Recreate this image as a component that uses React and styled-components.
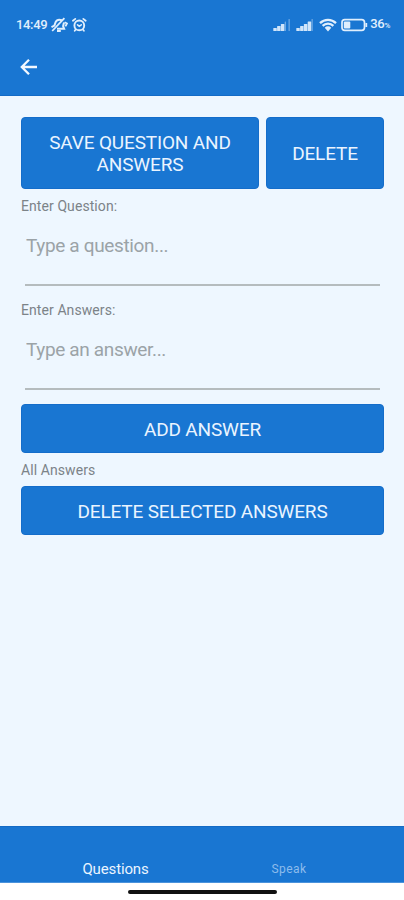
import React, { useEffect, useState } from 'react';
import styled, { createGlobalStyle } from 'styled-components';

const GlobalStyle = createGlobalStyle`
  * {
    box-sizing: border-box;
  }

  body {
    margin: 0;
    background-color: #ffffff;
    font-family: Roboto, 'Liberation Sans', sans-serif;
  }
`;

const Screen = styled.div`
  display: flex;
  flex-direction: column;
  width: 404px;
  height: 900px;
  background-color: #eef7ff;
`;

const Header = styled.header`
  height: 96px;
  background-color: #1976d2;
  border-bottom: 1px solid #136bc6;
  color: #e0effd;
`;

const StatusBar = styled.div`
  display: flex;
  align-items: center;
  justify-content: space-between;
  height: 48px;
  padding: 1px 14px 0 16px;
`;

const StatusGroup = styled.div`
  display: flex;
  align-items: center;
  gap: ${(props) => props.$gap};

  svg {
    display: block;
  }
`;

const Clock = styled.span`
  font-size: 13px;
  font-weight: 500;
  line-height: 16px;
  letter-spacing: -0.35px;
`;

const Charge = styled.span`
  margin-left: -2px;
  padding-top: 1px;
  font-size: 13px;
  font-weight: 500;
  line-height: 16px;
  letter-spacing: -0.3px;

  small {
    font-size: 8px;
  }
`;

const BackButton = styled.button`
  display: flex;
  margin: 7px 0 0 16px;
  padding: 0;
  border: 0;
  background: none;
  color: #f3f8ff;
`;

const Content = styled.main`
  display: flex;
  flex: 1;
  flex-direction: column;
  padding: 21px 20px 0 21px;
`;

const ButtonRow = styled.div`
  display: grid;
  grid-template-columns: 238px 118px;
  gap: 7px;
`;

const Button = styled.button`
  height: ${(props) => (props.$tall ? '72px' : '49px')};
  padding: 2px 16px 0;
  border: 1px solid #146dca;
  border-radius: 4px;
  background-color: #1976d2;
  color: #eaf4ff;
  font-family: inherit;
  font-size: 19px;
  line-height: 22px;
  letter-spacing: -0.16px;
  text-transform: uppercase;
`;

const Label = styled.label`
  height: ${(props) => props.$height};
  margin: 0;
  padding-top: ${(props) => props.$top || '9px'};
  color: #7c8388;
  font-size: 14px;
  line-height: 16px;
  letter-spacing: 0.08px;
`;

const Input = styled.input`
  height: 64px;
  margin: 0 4px;
  padding: 0 0 16px 1px;
  border: 0;
  border-bottom: 2px solid #b5bcbe;
  outline: 0;
  background: none;
  color: #33383c;
  font-family: inherit;
  font-size: 19px;
  letter-spacing: -0.35px;

  &::placeholder {
    color: #9ba3a7;
    opacity: 1;
  }
`;

const Answers = styled.section`
  display: flex;
  flex-direction: column;
  padding-top: 14px;
`;

const TabBar = styled.nav`
  display: grid;
  grid-template-columns: 231px 116px;
  align-items: end;
  height: 57px;
  padding-bottom: 5px;
  background-color: #1976d2;
  border-top: 1px solid #146bc5;
  border-bottom: 1px solid #4b93dc;
`;

const Tab = styled.a`
  color: ${(props) => (props.$active ? '#eaf4ff' : '#8dbcec')};
  font-size: ${(props) => (props.$active ? '15px' : '12px')};
  line-height: 16px;
  letter-spacing: ${(props) => (props.$active ? '-0.15px' : '0.4px')};
  text-align: center;
`;

const GestureBar = styled.footer`
  display: flex;
  justify-content: center;
  height: 17px;
  padding: 7px 0 0 1px;
  background-color: #ffffff;
`;

const HomePill = styled.div`
  width: 149px;
  height: 4px;
  border-radius: 2px;
  background-color: #111111;
`;

const MutedIcon = () => (
  <svg width='18' height='16' viewBox='0 0 18 16' fill='none' stroke='currentColor'>
    <path d='M1.5 10.2 4.4 8.6l1.2-3.4C6.6 2.9 9 2.2 12 3.2M14 5.6l-.9 3.6 1 2.5H7' strokeWidth='2' />
    <path d='M2.2 14 14.4 1.2' strokeWidth='1.8' />
    <path d='M7 14h3.8M14.6 5.2l2.4 1.2-1.6 3' strokeWidth='1.8' />
  </svg>
);

const AlarmIcon = () => (
  <svg width='16' height='16' viewBox='0 0 16 16' fill='none' stroke='currentColor' strokeLinecap='round'>
    <circle cx='8.3' cy='8.4' r='4.9' strokeWidth='1.9' />
    <path d='M1.9 3.8 4.3 1.9M14.7 3.8l-2.4-1.9M4.5 12.8l-.8 1M12.1 12.8l.8 1' strokeWidth='1.8' />
    <path d='M6.5 7.8l1.8 1.4 2-1.4' strokeWidth='1.5' />
  </svg>
);

const SignalIcon = ({ level }) => (
  <svg width='19' height='14' viewBox='0 0 19 14' fill='currentColor'>
    {[3, 5, 7, 9.5, 12].map((height, i) => (
      <rect
        key={height}
        x={i * 3.8 + 0.3}
        y={13 - height}
        width={i < level ? 3.5 : 1.3}
        height={height}
        rx='0.5'
        opacity={i < level ? 0.92 : 0.42}
      />
    ))}
  </svg>
);

const WifiIcon = () => (
  <svg width='18' height='14' viewBox='0 0 18 14' fill='none' stroke='currentColor'>
    <path d='M1 5.1C5.5.7 12.5.7 17 5.1M3.6 7.8c3.1-3 7.7-3 10.8 0' strokeWidth='2.3' />
    <path d='M5.7 9.7c2-1.8 4.6-1.8 6.6 0L9 13.4Z' fill='currentColor' stroke='none' />
  </svg>
);

const BatteryIcon = () => (
  <svg width='27' height='14' viewBox='0 0 27 14' fill='none'>
    <rect x='1' y='1.7' width='22.5' height='10.6' rx='2.8' stroke='currentColor' strokeWidth='1.7' />
    <rect x='2.8' y='3.5' width='6.5' height='7' rx='1' fill='currentColor' />
    <path d='M25.3 5v4' stroke='currentColor' strokeWidth='1.8' />
  </svg>
);

const BackIcon = () => (
  <svg width='24' height='24' viewBox='0 0 24 24' fill='none' stroke='currentColor' strokeWidth='2.3'>
    <path d='M21 12H6.5M13 4.8 5.8 12l7.2 7.2' />
  </svg>
);

function App() {
  const [question, setQuestion] = useState('');
  const [answer, setAnswer] = useState('');

  useEffect(() => {
    document.title = 'Questions';
  }, []);

  return (
    <Screen>
      <GlobalStyle />
      <Header>
        <StatusBar>
          <StatusGroup $gap='3px'>
            <Clock>14:49</Clock>
            <MutedIcon />
            <AlarmIcon />
          </StatusGroup>
          <StatusGroup $gap='4px'>
            <SignalIcon level={3} />
            <SignalIcon level={4} />
            <WifiIcon />
            <BatteryIcon />
            <Charge>
              36<small>%</small>
            </Charge>
          </StatusGroup>
        </StatusBar>
        <BackButton aria-label='Back'>
          <BackIcon />
        </BackButton>
      </Header>
      <Content>
        <ButtonRow>
          <Button $tall>Save question and answers</Button>
          <Button $tall>Delete</Button>
        </ButtonRow>
        <Label htmlFor='question' $height='33px'>
          Enter Question:
        </Label>
        <Input
          id='question'
          placeholder='Type a question...'
          value={question}
          onChange={(e) => setQuestion(e.target.value)}
        />
        <Label htmlFor='answer' $height='40px' $top='16px'>
          Enter Answers:
        </Label>
        <Input
          id='answer'
          placeholder='Type an answer...'
          value={answer}
          onChange={(e) => setAnswer(e.target.value)}
        />
        <Answers>
          <Button>Add answer</Button>
          <Label as='p' $height='33px'>
            All Answers
          </Label>
          <Button>Delete selected answers</Button>
        </Answers>
      </Content>
      <TabBar>
        <Tab $active>Questions</Tab>
        <Tab>Speak</Tab>
      </TabBar>
      <GestureBar>
        <HomePill />
      </GestureBar>
    </Screen>
  );
}

export default App;
